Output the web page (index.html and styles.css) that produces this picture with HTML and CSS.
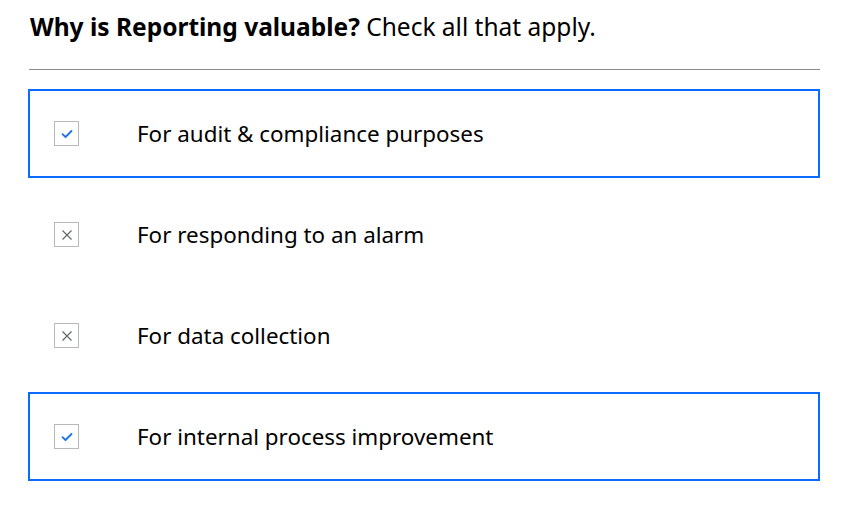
FILE: index.html
```html
<!DOCTYPE html>
<html>
<head>
<meta charset="utf-8">
<link rel="stylesheet" href="styles.css">
</head>
<body>
<div class="quiz">
  <h1 class="title"><b>Why is Reporting valuable?</b> Check all that apply.</h1>
  <div class="options">
    <div class="option selected">
      <span class="box">
        <svg width="12" height="10" viewBox="0 0 12 10"><path d="M1.5 5.2 L4.5 8 L10.5 2" fill="none" stroke="#1a73e8" stroke-width="1.8" stroke-linecap="round" stroke-linejoin="round"/></svg>
      </span>
      <span class="label">For audit &amp; compliance purposes</span>
    </div>
    <div class="option">
      <span class="box">
        <svg width="12" height="12" viewBox="0 0 12 12"><path d="M1.5 1.5 L10.5 10.5 M10.5 1.5 L1.5 10.5" fill="none" stroke="#5f6368" stroke-width="1.1"/></svg>
      </span>
      <span class="label">For responding to an alarm</span>
    </div>
    <div class="option">
      <span class="box">
        <svg width="12" height="12" viewBox="0 0 12 12"><path d="M1.5 1.5 L10.5 10.5 M10.5 1.5 L1.5 10.5" fill="none" stroke="#5f6368" stroke-width="1.1"/></svg>
      </span>
      <span class="label">For data collection</span>
    </div>
    <div class="option selected">
      <span class="box">
        <svg width="12" height="10" viewBox="0 0 12 10"><path d="M1.5 5.2 L4.5 8 L10.5 2" fill="none" stroke="#1a73e8" stroke-width="1.8" stroke-linecap="round" stroke-linejoin="round"/></svg>
      </span>
      <span class="label">For internal process improvement</span>
    </div>
  </div>
</div>
</body>
</html>
```
FILE: styles.css
```css
html, body {
  margin: 0;
  padding: 0;
  background: #ffffff;
}
body {
  font-family: "Noto Sans", "Open Sans", sans-serif;
  color: #000;
}
.quiz {
  width: 792px;
  padding: 0 0 0 28px;
}
.title {
  margin: 0 0 0 1px;
  padding: 10px 0 0 1px;
  height: 70px;
  box-sizing: border-box;
  font-size: 24.5px;
  font-weight: 400;
  line-height: 34px;
  border-bottom: 1px solid #8c8c8c;
}
.title b {
  font-weight: 700;
}
.options {
  display: flex;
  flex-direction: column;
  gap: 12px;
  margin-top: 19px;
}
.option {
  height: 89px;
  box-sizing: border-box;
  border: 2px solid transparent;
  display: flex;
  align-items: center;
  padding-left: 24px;
}
.option.selected {
  border-color: #0a6cff;
}
.box {
  width: 25px;
  height: 25px;
  box-sizing: border-box;
  border: 1px solid #b9b9b9;
  display: flex;
  align-items: center;
  justify-content: center;
  flex: none;
}
.label {
  margin-left: 58px;
  font-size: 22.4px;
  line-height: 30px;
  color: #000;
}
```
